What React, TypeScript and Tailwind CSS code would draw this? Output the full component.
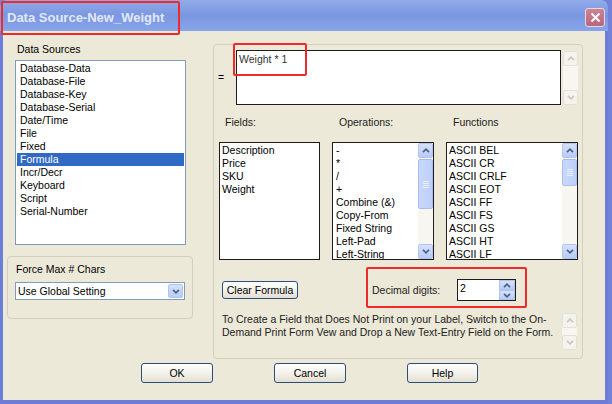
import React from "react";

type Dir = "up" | "down";

const Chevron = ({ dir, color }: { dir: Dir; color: string }) => (
  <svg width="8" height="5" viewBox="0 0 8 5">
    <path
      d={dir === "up" ? "M1 4.2 L4 1.2 L7 4.2" : "M1 0.8 L4 3.8 L7 0.8"}
      stroke={color}
      strokeWidth="1.7"
      fill="none"
    />
  </svg>
);

const ArrowBtn = ({ dir, disabled, h = "h-[15px]" }: { dir: Dir; disabled?: boolean; h?: string }) => (
  <div
    className={`${h} w-full flex items-center justify-center rounded-[2px] border ${
      disabled
        ? "bg-[#f4f3ee] border-[#e3e1d6]"
        : "bg-gradient-to-b from-[#d5e1fd] to-[#b8cbf8] border-[#b2c5f0]"
    }`}
  >
    <Chevron dir={dir} color={disabled ? "#c9c7bd" : "#4d6185"} />
  </div>
);

const ScrollBar = ({ thumb, disabled }: { thumb?: string; disabled?: boolean }) => (
  <div className="w-[15px] h-full flex flex-col bg-[#f7f6f1] shrink-0">
    <ArrowBtn dir="up" disabled={disabled} />
    <div className="flex-1 flex flex-col">
      {thumb && (
        <div
          className={`${thumb} mt-[1px] rounded-[2px] border border-[#a8bdee] bg-gradient-to-r from-[#c9d8fc] to-[#bccffa] flex flex-col items-center justify-center gap-[1px]`}
        >
          <div className="w-[6px] h-[1px] bg-[#e8effe]" />
          <div className="w-[6px] h-[1px] bg-[#e8effe]" />
          <div className="w-[6px] h-[1px] bg-[#e8effe]" />
          <div className="w-[6px] h-[1px] bg-[#e8effe]" />
        </div>
      )}
    </div>
    <ArrowBtn dir="down" disabled={disabled} />
  </div>
);

const XpButton = ({ label, w }: { label: string; w: string }) => (
  <div
    className={`${w} h-[20px] rounded-[3px] border border-[#2e4d7b] bg-gradient-to-b from-[#fefefd] via-[#f3f2ec] to-[#e2dfd1] flex items-center justify-center`}
  >
    {label}
  </div>
);

const dataSources = [
  "Database-Data",
  "Database-File",
  "Database-Key",
  "Database-Serial",
  "Date/Time",
  "File",
  "Fixed",
  "Formula",
  "Incr/Decr",
  "Keyboard",
  "Script",
  "Serial-Number",
];

const fields = ["Description", "Price", "SKU", "Weight"];
const operations = ["-", "*", "/", "+", "Combine (&)", "Copy-From", "Fixed String", "Left-Pad", "Left-String"];
const functions = [
  "ASCII BEL",
  "ASCII CR",
  "ASCII CRLF",
  "ASCII EOT",
  "ASCII FF",
  "ASCII FS",
  "ASCII GS",
  "ASCII HT",
  "ASCII LF",
];

export default function App() {
  return (
    <div className="w-[612px] h-[404px] overflow-hidden relative bg-[#7282d8] font-['Liberation_Sans',Arial,sans-serif] text-[10.5px] leading-[13px] text-black">
      <div className="w-[608px] h-[404px] flex flex-col rounded-t-[7px] bg-[#6c7cd7]">
        {/* Title bar */}
        <div className="h-[31px] flex items-center pl-[7px] pr-[3px] rounded-t-[7px] bg-gradient-to-b from-[#93aae9] via-[#7b97e1] to-[#88a4ea]">
          <span className="pt-[4px] text-[13px] leading-[16px] font-bold text-[#e2e9f8]">Data Source-New_Weight</span>
          <div className="ml-auto mt-[4px] w-[20px] h-[19px] rounded-[3px] border border-[#e9d8e4] bg-gradient-to-b from-[#cc8594] to-[#b8667a] flex items-center justify-center">
            <svg width="11" height="11" viewBox="0 0 11 11">
              <path d="M1.5 1.5 L9.5 9.5 M9.5 1.5 L1.5 9.5" stroke="#ffffff" strokeWidth="2" />
            </svg>
          </div>
        </div>

        {/* Client area */}
        <div className="flex-1 mx-[3px] mb-[4px] bg-[#ece9d8] flex flex-col">
          <div className="flex">
            {/* Left column */}
            <div className="w-[210px] flex flex-col">
              <div className="mt-[12px] ml-[14px] h-[13px]">Data Sources</div>
              <div className="mt-[4px] ml-[12px] w-[171px] h-[185px] bg-white border border-[#7f9db9] pt-[1px] px-[1px]">
                {dataSources.map((s) => (
                  <div
                    key={s}
                    className={`h-[13px] pl-[3px] ${s === "Formula" ? "bg-[#316ac5] text-white" : ""}`}
                  >
                    {s}
                  </div>
                ))}
              </div>
              <div className="mt-[11px] ml-[4px] w-[186px] h-[63px] border border-[#d0d0bf] rounded-[4px] pt-[6px] pl-[8px]">
                <div className="h-[13px]">Force Max # Chars</div>
                <div className="mt-[6px] ml-[-1px] w-[170px] h-[18px] bg-white border border-[#7f9db9] flex items-center pl-[2px] pr-[1px]">
                  <span className="flex-1">Use Global Setting</span>
                  <div className="w-[15px] h-[14px] rounded-[2px] border border-[#b2c5f0] bg-gradient-to-b from-[#d5e1fd] to-[#b8cbf8] flex items-center justify-center">
                    <Chevron dir="down" color="#4d6185" />
                  </div>
                </div>
              </div>
            </div>

            {/* Right group */}
            <div className="mt-[13px] w-[370px] h-[315px] border border-[#d0d0bf] rounded-[4px] flex flex-col">
              <div className="mt-[5px] flex items-center">
                <div className="w-[22px] pl-[4px]">=</div>
                <div className="w-[325px] h-[55px] bg-white border border-[#1d1d1d] pl-[2px] pt-[2px] text-[#333]">
                  Weight * 1
                </div>
                <div className="ml-[2px] h-[55px] pt-[1px]">
                  <ScrollBar disabled />
                </div>
              </div>

              <div className="mt-[11px] ml-[5px] flex gap-[12px]">
                <div className="w-[101px] flex flex-col">
                  <div className="h-[26px] pl-[6px] text-[#222]">Fields:</div>
                  <div className="h-[118px] bg-white border border-[#1d1d1d] pl-[2px] pt-[1px] overflow-hidden">
                    {fields.map((f) => (
                      <div key={f} className="h-[13px]">
                        {f}
                      </div>
                    ))}
                  </div>
                </div>
                <div className="w-[102px] flex flex-col">
                  <div className="h-[26px] pl-[7px] text-[#222]">Operations:</div>
                  <div className="h-[118px] bg-white border border-[#1d1d1d] flex overflow-hidden">
                    <div className="flex-1 pl-[3px] pt-[1px] overflow-hidden">
                      {operations.map((o) => (
                        <div key={o} className="h-[13px] whitespace-nowrap">
                          {o}
                        </div>
                      ))}
                    </div>
                    <ScrollBar thumb="h-[50px]" />
                  </div>
                </div>
                <div className="w-[132px] flex flex-col">
                  <div className="h-[26px] pl-[7px] text-[#222]">Functions</div>
                  <div className="h-[118px] bg-white border border-[#1d1d1d] flex overflow-hidden">
                    <div className="flex-1 pl-[2px] pt-[1px] overflow-hidden">
                      {functions.map((f) => (
                        <div key={f} className="h-[13px] whitespace-nowrap">
                          {f}
                        </div>
                      ))}
                    </div>
                    <ScrollBar thumb="h-[27px]" />
                  </div>
                </div>
              </div>

              <div className="mt-[19px] h-[22px] flex items-center pl-[8px]">
                <div className="w-[76px] h-[18px] rounded-[3px] border border-[#2e4d7b] bg-gradient-to-b from-[#fefefd] via-[#f3f2ec] to-[#e2dfd1] flex items-center justify-center">
                  Clear Formula
                </div>
                <div className="ml-[74px] w-[85px] text-[#222]">Decimal digits:</div>
                <div className="w-[59px] h-[22px] flex border border-[#1d1d1d] bg-white">
                  <div className="flex-1 pl-[2px] pt-[2px]">2</div>
                  <div className="w-[16px] flex flex-col">
                    <div className="flex-1 border border-[#b2c5f0] bg-gradient-to-b from-[#d5e1fd] to-[#b8cbf8] flex items-center justify-center">
                      <Chevron dir="up" color="#4d6185" />
                    </div>
                    <div className="flex-1 border border-[#b2c5f0] bg-gradient-to-b from-[#d5e1fd] to-[#b8cbf8] flex items-center justify-center">
                      <Chevron dir="down" color="#4d6185" />
                    </div>
                  </div>
                </div>
              </div>

              <div className="mt-[12px] flex">
                <div className="w-[348px] pl-[8px] text-[#222] whitespace-nowrap overflow-hidden">
                  To Create a Field that Does Not Print on your Label, Switch to the On-
                  <br />
                  Demand Print Form Vew and Drop a New Text-Entry Field on the Form.
                </div>
                <div className="h-[37px]">
                  <ScrollBar disabled />
                </div>
              </div>
            </div>
          </div>

          {/* Dialog buttons */}
          <div className="mt-[4px] ml-[138px] flex gap-[61px]">
            <XpButton label="OK" w="w-[72px]" />
            <XpButton label="Cancel" w="w-[72px]" />
            <XpButton label="Help" w="w-[71px]" />
          </div>
        </div>
      </div>

      {/* Red annotation boxes */}
      <div className="absolute left-[1px] top-[1px] w-[179px] h-[34px] border-2 border-[#ee2a2a] rounded-[2px]" />
      <div className="absolute left-[233px] top-[43px] w-[74px] h-[33px] border-2 border-[#ee2a2a] rounded-[2px]" />
      <div className="absolute left-[366px] top-[267px] w-[161px] h-[41px] border-2 border-[#ee2a2a] rounded-[2px]" />
    </div>
  );
}
